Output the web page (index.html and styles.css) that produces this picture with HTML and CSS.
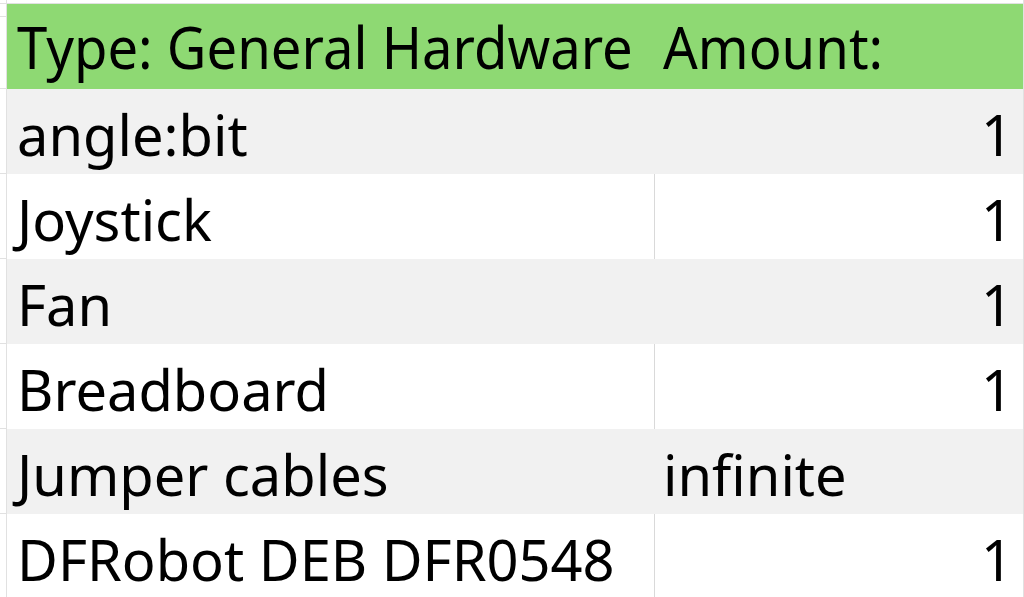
FILE: index.html
```html
<!DOCTYPE html>
<html lang="en">
<head>
<meta charset="utf-8">
<title>General Hardware</title>
<link rel="stylesheet" href="styles.css">
</head>
<body>
<div class="sheet">
  <div class="row top"><div class="gut"></div><div class="c"></div><div class="c"></div><div class="edge"></div></div>
  <div class="row hdr">
    <div class="gut"></div>
    <div class="c name"><span class="narrow">Type: General Hardware</span></div>
    <div class="c amt-h"><span class="narrow">Amount:</span></div>
    <div class="edge"></div>
  </div>
  <div class="row gray"><div class="gut"></div><div class="c name">angle:bit</div><div class="c num">1</div><div class="edge"></div></div>
  <div class="row white"><div class="gut"></div><div class="c name">Joystick</div><div class="c num">1</div><div class="edge"></div></div>
  <div class="row gray"><div class="gut"></div><div class="c name">Fan</div><div class="c num">1</div><div class="edge"></div></div>
  <div class="row white"><div class="gut"></div><div class="c name">Breadboard</div><div class="c num">1</div><div class="edge"></div></div>
  <div class="row gray"><div class="gut"></div><div class="c name">Jumper cables</div><div class="c txt">infinite</div><div class="edge"></div></div>
  <div class="row white"><div class="gut"></div><div class="c name">DFRobot DEB DFR0548</div><div class="c num">1</div><div class="edge"></div></div>
</div>
</body>
</html>
```
FILE: styles.css
```css
html, body {
  margin: 0;
  padding: 0;
  background: #ffffff;
  overflow: hidden;
}
body {
  width: 1024px;
  height: 597px;
  font-family: "Noto Sans", "Open Sans", sans-serif;
  color: #000000;
}
.sheet {
  display: flex;
  flex-direction: column;
}
.row {
  display: grid;
  grid-template-columns: 7px 648px 368px 1px;
  height: 85px;
}
.row.top {
  height: 4px;
  border-bottom: 1px solid #e1e1e1;
  box-sizing: border-box;
}
.row.top .c:first-of-type {
  border-right: 1px solid #e1e1e1;
}
.gut {
  border-right: 1px solid #e1e1e1;
  border-bottom: 1px solid #e1e1e1;
  box-sizing: border-box;
}
.edge {
  background: #e1e1e1;
}
.c {
  font-size: 56px;
  line-height: 56px;
  padding-top: 17px;
  white-space: nowrap;
  box-sizing: border-box;
  overflow: visible;
}
.hdr .c {
  background: #8ed973;
}
.hdr .c.name,
.hdr .c.amt-h {
  padding-top: 15px;
}
.gray .c {
  background: #f1f1f1;
}
.white .c.name {
  border-right: 1px solid #d9d9d9;
}
.name {
  padding-left: 10px;
}
.num {
  text-align: right;
  padding-right: 10px;
}
.txt, .amt-h {
  padding-left: 8px;
}
.narrow {
  display: inline-block;
  transform: scale(0.972, 1.03);
  transform-origin: left bottom;
}
```
